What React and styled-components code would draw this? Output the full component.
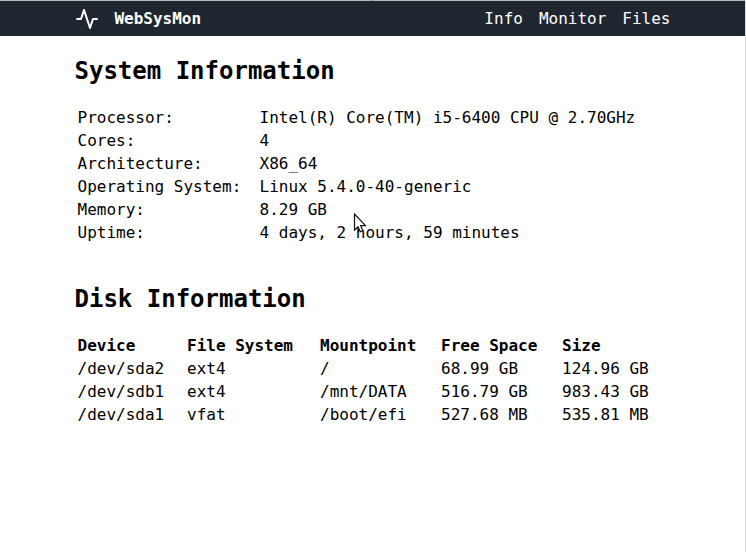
import React from "react";
import styled, { createGlobalStyle } from "styled-components";

const GlobalStyle = createGlobalStyle`
  html, body { margin: 0; background: #fff; }
  body { font-family: "DejaVu Sans Mono", monospace; font-size: 16px; color: #000; overflow: hidden; }
`;

const Page = styled.div`
  position: relative;
  box-sizing: border-box;
  height: 552px;
  border-right: 1px solid #d8d8d8;
`;
const NavBar = styled.nav`
  box-sizing: border-box;
  height: 36px;
  border-top: 1px solid #b4b8b8;
  background: #1f2630;
  color: #fff;
  display: flex;
  align-items: center;
  padding: 0 74.5px 0 75px;
`;
const EdgeTick = styled.span`
  position: absolute;
  top: 0;
  left: 372px;
  width: 1px;
  height: 1px;
  background: #70767a;
`;
const Brand = styled.div`
  display: flex;
  align-items: center;
  gap: 15.4px;
  font-weight: bold;
`;
const Logo = styled.svg`
  margin-top: 1px;
  fill: none;
  stroke: #fff;
  stroke-width: 2;
  stroke-linecap: butt;
  stroke-linejoin: bevel;
`;
const Links = styled.div`
  display: flex;
  gap: 16px;
  margin-left: auto;
`;
const NavLink = styled.a`
  color: #fff;
  line-height: 19px;
`;
const Main = styled.main`
  padding: 21px 74.5px 0;
`;
const Section = styled.section`
  height: 228px;
`;
const Title = styled.h2`
  margin: 0 0 20px;
  font-size: 24px;
  line-height: 29px;
`;
const Grid = styled.div`
  display: grid;
  grid-template-columns: ${(p) => p.$columns};
  grid-auto-rows: 23px;
  padding-left: 3px;
  line-height: 23px;
  white-space: pre;
`;
const Cell = styled.span`
  font-weight: ${(p) => (p.$head ? "bold" : "normal")};
`;
const Pointer = styled.svg`
  position: absolute;
  left: 353px;
  top: 212px;
`;

const info = [
  ["Processor:", "Intel(R) Core(TM) i5-6400 CPU @ 2.70GHz"],
  ["Cores:", "4"],
  ["Architecture:", "X86_64"],
  ["Operating System:", "Linux 5.4.0-40-generic"],
  ["Memory:", "8.29 GB"],
  ["Uptime:", "4 days, 2 hours, 59 minutes"],
];
const disks = [
  ["Device", "File System", "Mountpoint", "Free Space", "Size"],
  ["/dev/sda2", "ext4", "/", "68.99 GB", "124.96 GB"],
  ["/dev/sdb1", "ext4", "/mnt/DATA", "516.79 GB", "983.43 GB"],
  ["/dev/sda1", "vfat", "/boot/efi", "527.68 MB", "535.81 MB"],
];

function DataGrid({ rows, columns, header }) {
  return (
    <Grid $columns={columns}>
      {rows.map((row, r) =>
        row.map((text, c) => (
          <Cell key={`${r}-${c}`} $head={header && r === 0}>{text}</Cell>
        ))
      )}
    </Grid>
  );
}

export default function App() {
  return (
    <Page>
      <GlobalStyle />
      <NavBar>
        <Brand>
          <Logo width="24" height="24" viewBox="0 0 24 24">
            <path d="M1.3 12H6L9 3L15 21L18 12H22.7" />
            <path d="M8 2.7H10M14 21.3H16" strokeWidth="1" />
          </Logo>
          WebSysMon
        </Brand>
        <Links>
          <NavLink>Info</NavLink>
          <NavLink>Monitor</NavLink>
          <NavLink>Files</NavLink>
        </Links>
      </NavBar>
      <EdgeTick />
      <Main>
        <Section>
          <Title>System Information</Title>
          <DataGrid rows={info} columns="182px 1fr" />
        </Section>
        <Section>
          <Title>Disk Information</Title>
          <DataGrid rows={disks} columns="109.5px 133px 121px 121px 1fr" header />
        </Section>
      </Main>
      <Pointer width="14" height="22" viewBox="0 0 14 22">
        <path d="M1.5 2V18L5 14.7L7.3 19.8L9.8 18.7L7.7 13.7H12.5Z" fill="#fff" stroke="#111" strokeWidth="1.2" />
      </Pointer>
    </Page>
  );
}
